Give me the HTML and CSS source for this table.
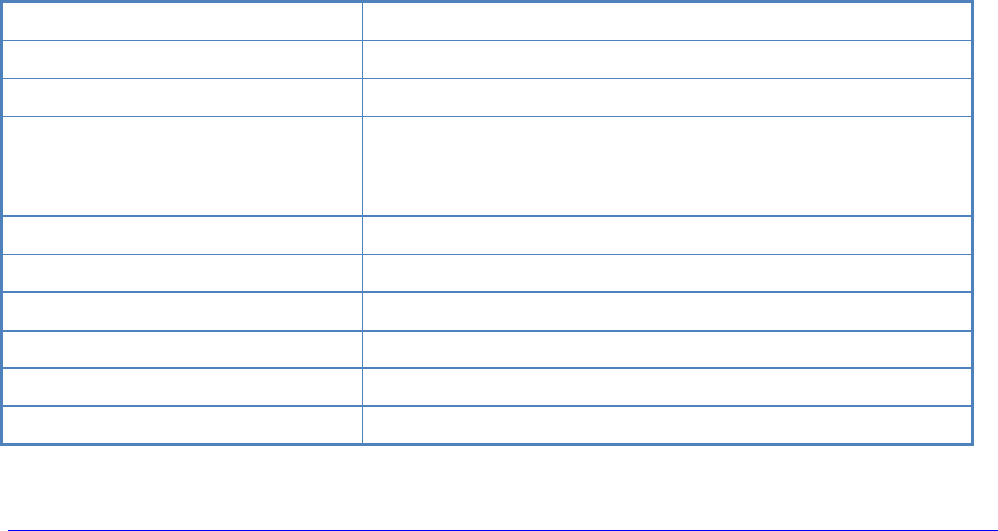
FILE: index.html
```html
<!DOCTYPE html>
<html>
   <head>
       <title>Table</title>
       <link rel="stylesheet" href="styles.css">
   </head>
   <body>
        <div class="sheet">
            <div class="row r-short"><div class="cell key"></div><div class="cell val"></div></div>
            <div class="row r-short"><div class="cell key"></div><div class="cell val"></div></div>
            <div class="row r-short"><div class="cell key"></div><div class="cell val"></div></div>
            <div class="row r-tall thick"><div class="cell key"></div><div class="cell val"></div></div>
            <div class="row r-short"><div class="cell key"></div><div class="cell val"></div></div>
            <div class="row r-short thick"><div class="cell key"></div><div class="cell val"></div></div>
            <div class="row r-wide thick"><div class="cell key"></div><div class="cell val"></div></div>
            <div class="row r-narrow thick"><div class="cell key"></div><div class="cell val"></div></div>
            <div class="row r-short thick"><div class="cell key"></div><div class="cell val"></div></div>
            <div class="row r-last"><div class="cell key"></div><div class="cell val"></div></div>
        </div>
        <div class="rule"></div>
   </body>
</html>
```

FILE: styles.css
```css
body {
  margin: 0;
  background: #ffffff;
  font-family: "Liberation Sans", Arial, sans-serif;
}

.sheet {
  width: 974px;
  box-sizing: border-box;
  border: 3px solid #4f81bd;
  display: flex;
  flex-direction: column;
}

.row {
  display: flex;
  box-sizing: border-box;
  border-bottom: 1px solid #4f81bd;
}

.row.thick {
  border-bottom-width: 2px;
}

.r-short { height: 38px; }
.r-tall { height: 100px; }
.r-wide { height: 39px; }
.r-narrow { height: 37px; }

.r-last {
  height: 36px;
  border-bottom: none;
}

.cell {
  box-sizing: border-box;
}

.key {
  width: 360px;
  border-right: 1px solid #4f81bd;
}

.val {
  flex: 1;
}

.rule {
  margin: 84px 0 0 8px;
  height: 1px;
  background: #0000ff;
}
```
